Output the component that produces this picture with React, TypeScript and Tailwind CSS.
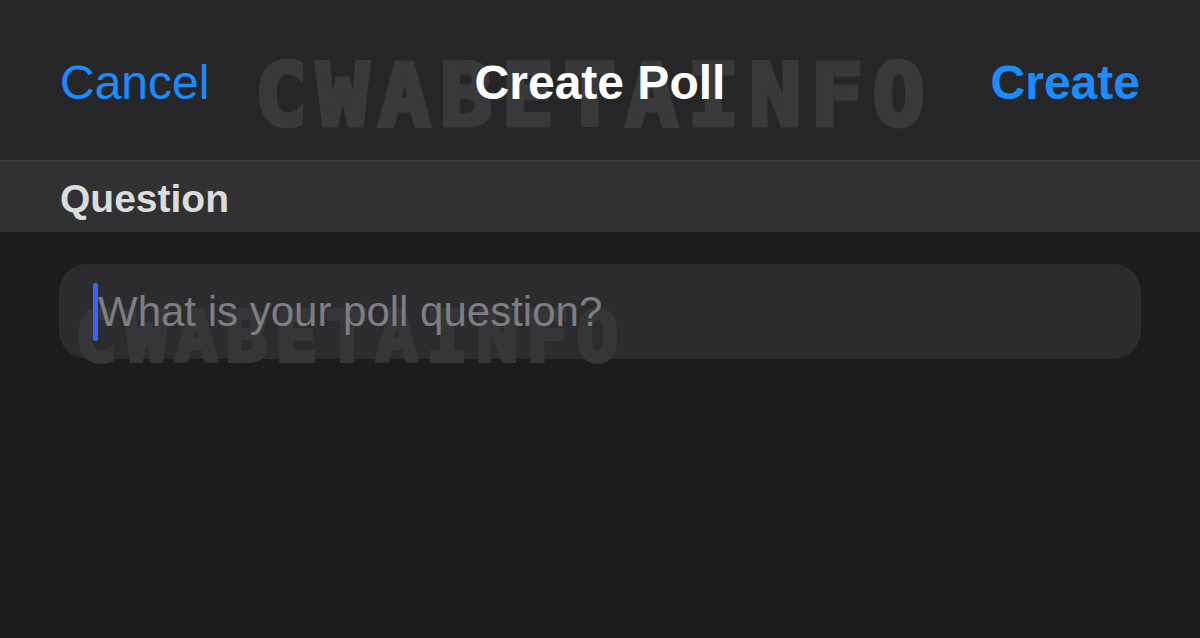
import React from 'react';

const sans = { fontFamily: '"Liberation Sans", Arial, sans-serif' };

function Watermark({ className }: { className: string }) {
  return (
    <div
      className={`pointer-events-none absolute select-none font-bold leading-none ${className}`}
      style={{ fontFamily: '"DejaVu Sans Mono", monospace' }}
    >
      CWABETAINFO
    </div>
  );
}

export default function App() {
  return (
    <div className="relative h-[638px] w-[1200px] overflow-hidden bg-[#1c1c1e]" style={sans}>
      {/* Nav bar */}
      <header className="relative flex h-[162px] items-center justify-between border-b-2 border-[#3a3a3d] bg-[#262628] px-[60px] pt-[5px]">
        <Watermark className="left-[255px] top-[52px] text-[86px] tracking-[10px] text-[#39393b] [-webkit-text-stroke:5px_#39393b]" />
        <button className="relative text-[48px] text-[#1a8cff]">Cancel</button>
        <h1 className="relative text-[48px] font-bold text-white">Create Poll</h1>
        <button className="relative text-[48px] font-bold text-[#1a8cff]">Create</button>
      </header>

      {/* Section header */}
      <div className="flex h-[70px] items-center bg-[#313133] px-[60px] pt-[4px]">
        <span className="text-[39px] font-bold text-[#dcdcde]">Question</span>
      </div>

      {/* Question input */}
      <div className="px-[59px] pt-[32px]">
        <div className="relative flex h-[95px] items-center rounded-[28px] bg-[#2c2c2e] pl-[34px]">
          <Watermark className="left-[16px] top-[38px] text-[70px] tracking-[8px] text-[#363638] [-webkit-text-stroke:4px_#363638]" />
          <span className="relative h-[58px] w-[5px] rounded-full bg-[#3f63f2]" />
          <span className="relative text-[42px] text-[#7d7d82]">What is your poll question?</span>
        </div>
      </div>
    </div>
  );
}
